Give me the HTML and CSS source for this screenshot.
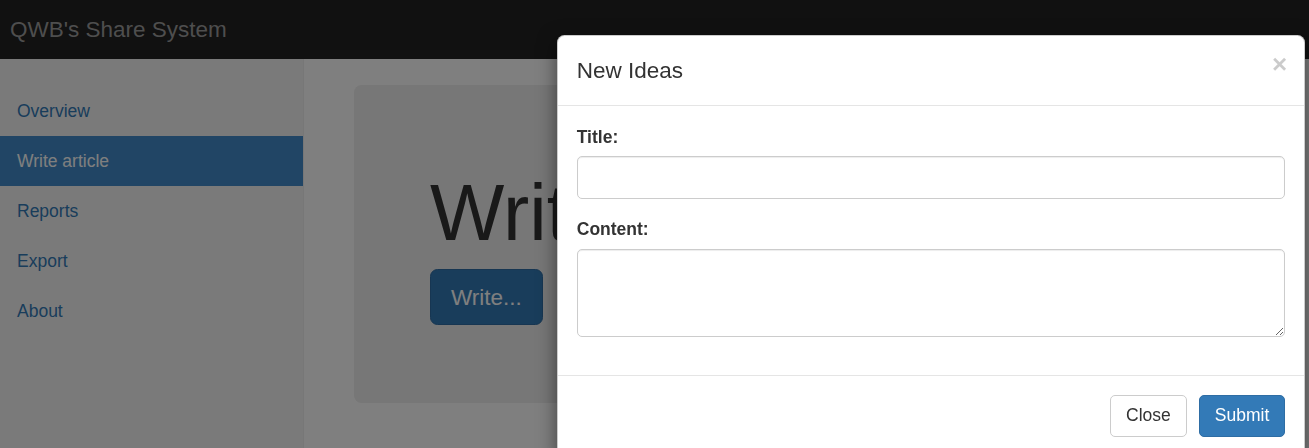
FILE: index.html
```html
<!doctype html>
<html lang="en">
<head>
 <meta charset="UTF-8">
 <meta name="viewport" content="width=device-width, initial-scale=1.0">
 <title>QWB's Share System</title>
 <link rel="stylesheet" href="styles.css">
</head>
<body>
<div class="navbar">
 <a class="brand" href="#">QWB's Share System</a>
</div>
<div class="layout">
 <div class="sidebar">
  <ul class="nav-sidebar">
   <li><a href="#">Overview</a></li>
   <li class="active"><a href="#">Write article</a></li>
   <li><a href="#">Reports</a></li>
   <li><a href="#">Export</a></li>
   <li><a href="#">About</a></li>
  </ul>
 </div>
 <div class="main">
  <div class="jumbotron">
   <h1>Write</h1>
   <p><a class="btn btn-primary btn-lg" href="#">Write...</a></p>
  </div>
 </div>
</div>

<div class="backdrop"></div>

<div class="modal">
 <div class="modal-header">
  <button class="close" type="button">&times;</button>
  <h4 class="modal-title">New Ideas</h4>
 </div>
 <div class="modal-body">
  <div class="form-group">
   <label for="title">Title:</label>
   <input class="form-control" id="title" type="text">
  </div>
  <div class="form-group">
   <label for="content">Content:</label>
   <textarea class="form-control area" id="content"></textarea>
  </div>
 </div>
 <div class="modal-footer">
  <button class="btn btn-default" type="button">Close</button>
  <button class="btn btn-primary" type="button">Submit</button>
 </div>
</div>
</body>
</html>
```

FILE: styles.css
```css
*{
 margin:0;
 padding:0;
 box-sizing:border-box;
}
html,body{
 height:100%;
 overflow:hidden;
}
body{
 font-family:"Liberation Sans",Arial,sans-serif;
 font-size:17.5px;
 line-height:25px;
 color:#333;
 background:#fff;
}
a{
 color:#337ab7;
 text-decoration:none;
}
.navbar{
 height:59px;
 background:#222;
 display:flex;
 align-items:center;
 padding-left:10px;
}
.brand{
 color:#9d9d9d;
 font-size:22.5px;
 line-height:30px;
}
.layout{
 display:flex;
 height:calc(100% - 59px);
}
.sidebar{
 width:304px;
 flex:none;
 background:#f5f5f5;
 border-right:1px solid #eee;
 padding-top:27px;
}
.nav-sidebar{
 list-style:none;
}
.nav-sidebar a{
 display:block;
 padding:12.5px 17px;
}
.nav-sidebar .active a{
 background:#428bca;
 color:#fff;
}
.main{
 flex:1;
 padding:26px 50px 0 50px;
}
.jumbotron{
 background:#eee;
 border-radius:7.5px;
 padding:60px 76px;
}
.jumbotron h1{
 font-size:78.75px;
 line-height:1.1;
 font-weight:500;
 margin:25px 0 12.5px;
}
.jumbotron p{
 margin-bottom:18px;
}
.btn{
 display:inline-block;
 font-family:inherit;
 font-size:17.5px;
 line-height:25px;
 padding:7.5px 15px;
 border:1px solid transparent;
 border-radius:5px;
 cursor:pointer;
}
.btn-lg{
 font-size:22.5px;
 line-height:29px;
 padding:12.5px 20px;
 border-radius:7.5px;
}
.btn-primary{
 background:#337ab7;
 border-color:#2e6da4;
 color:#fff;
}
.btn-default{
 background:#fff;
 border-color:#ccc;
 color:#333;
}
.backdrop{
 position:fixed;
 inset:0;
 background:rgba(0,0,0,.5);
}
.modal{
 position:absolute;
 left:557px;
 top:35px;
 width:748px;
 background:#fff;
 border:1px solid rgba(0,0,0,.2);
 border-radius:7.5px;
 box-shadow:0 6px 19px rgba(0,0,0,.5);
}
.modal-header{
 padding:18.5px 18.75px;
 border-bottom:1px solid #e5e5e5;
}
.modal-title{
 font-size:22.5px;
 line-height:32px;
 font-weight:500;
}
.close{
 float:right;
 margin:-4px -2px 0 0;
 background:none;
 border:0;
 font-family:inherit;
 font-size:26px;
 font-weight:bold;
 line-height:1;
 color:#000;
 opacity:.2;
}
.modal-body{
 padding:18.75px 18.75px 19.75px;
}
.form-group{
 margin-bottom:18.75px;
}
label{
 display:block;
 font-weight:bold;
 margin-bottom:6.25px;
}
.form-control{
 display:block;
 width:100%;
 height:42.5px;
 border:1px solid #ccc;
 border-radius:5px;
 box-shadow:inset 0 1px 1px rgba(0,0,0,.075);
 font-family:inherit;
 font-size:17.5px;
 padding:7.5px 15px;
}
.area{
 height:88px;
 resize:vertical;
}
.modal-footer{
 padding:18.75px;
 border-top:1px solid #e5e5e5;
 display:flex;
 justify-content:flex-end;
 gap:12px;
}
```
